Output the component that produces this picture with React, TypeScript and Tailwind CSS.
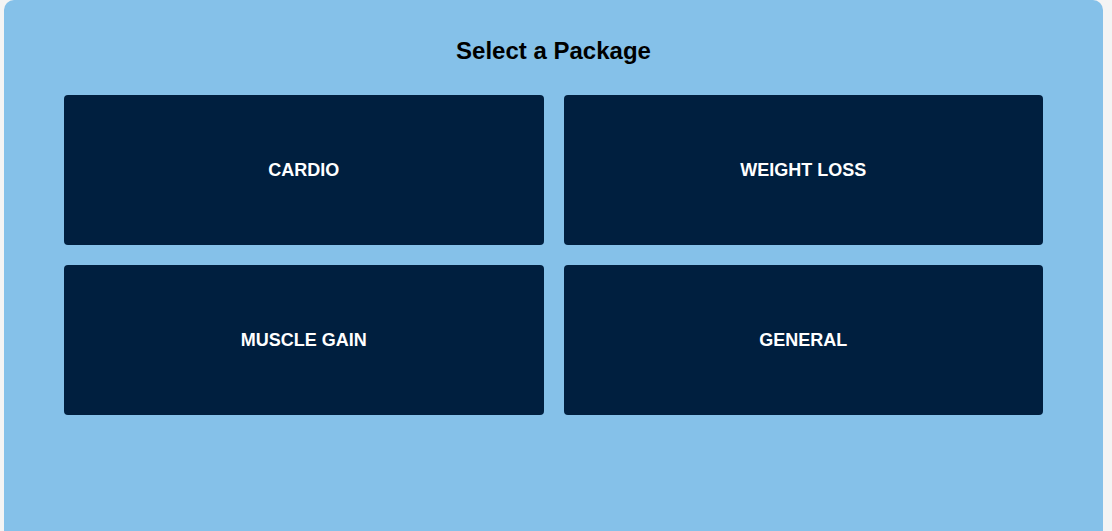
const packages = ["CARDIO", "WEIGHT LOSS", "MUSCLE GAIN", "GENERAL"];

export default function App() {
  return (
    <div className="h-[531px] overflow-hidden bg-[#f4f4f4] pl-[4px] font-['Liberation_Sans',Arial,sans-serif]">
      <div className="w-[1099px] h-[560px] rounded-[10px] bg-[#85c1e9] px-[60px] pt-[37px]">
        <h2 className="text-center text-[24px] leading-[28px] font-bold text-black mb-[30px]">
          Select a Package
        </h2>
        <div className="grid grid-cols-2 gap-[20px]">
          {packages.map((p) => (
            <button
              key={p}
              className="h-[150px] rounded-[4px] bg-[#001f3f] text-white text-[18px] font-bold flex items-center justify-center"
            >
              {p}
            </button>
          ))}
        </div>
      </div>
    </div>
  );
}
